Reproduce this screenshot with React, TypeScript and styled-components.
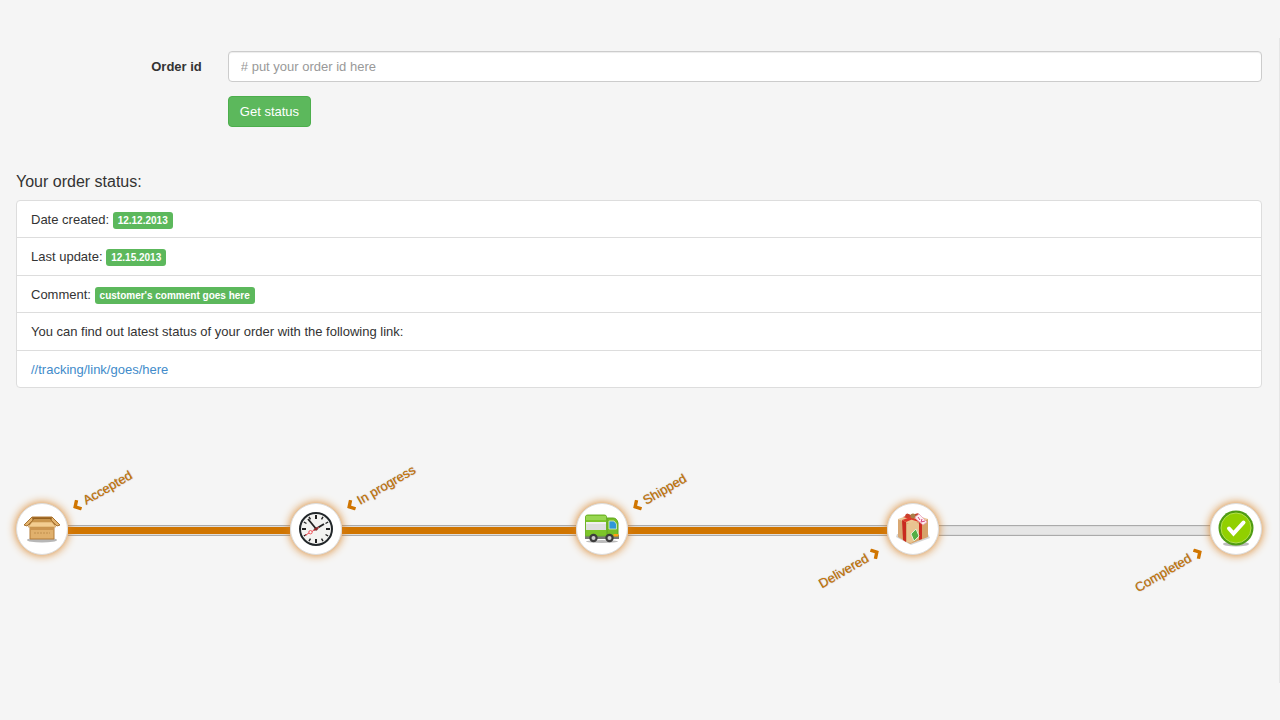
import React from "react";
import styled, { createGlobalStyle, css } from "styled-components";

const GlobalStyle = createGlobalStyle`
  * { box-sizing: border-box; }
  body {
    margin: 0;
    background: #f5f5f5;
    color: #333;
    font: 13px/20px "Liberation Sans", Arial, sans-serif;
  }
`;

const Well = styled.main`
  margin: 38px 0;
  padding: 13px 17px 128px 16px;
  border-right: 1px solid #e6e6e6;
  overflow: hidden;
`;

const OrderForm = styled.form`
  display: grid;
  grid-template-columns: 17% 83%;
  row-gap: 14px;
`;

const Label = styled.label`
  padding: 6px 26px 0 0;
  text-align: right;
  font-weight: bold;
`;

const TextInput = styled.input`
  width: 100%;
  height: 31px;
  padding: 0 12px;
  border: 1px solid #ccc;
  border-radius: 4px;
  background: #fff;
  box-shadow: inset 0 1px 1px rgba(0, 0, 0, 0.075);
  color: #555;
  font: inherit;
  &::placeholder { color: #999; opacity: 1; }
`;

const SubmitButton = styled.button`
  grid-column: 2;
  justify-self: start;
  height: 31px;
  padding: 0 11px;
  border: 1px solid #4cae4c;
  border-radius: 4px;
  background: #5cb85c;
  color: #fff;
  font: inherit;
`;

const Heading = styled.h4`
  margin: 45px 0 8px;
  font-size: 16px;
  line-height: 20px;
  font-weight: normal;
`;

const StatusList = styled.ul`
  margin: 0;
  padding: 0;
  list-style: none;
  border: 1px solid #ddd;
  border-radius: 4px;
  background: #fff;
`;

const StatusItem = styled.li`
  padding: 9px 14px 7px;
  & + & { border-top: 1px solid #ddd; }
  &:nth-child(even) { padding-bottom: 8px; }
`;

const Badge = styled.span`
  display: inline-block;
  padding: 0 5px;
  border-radius: 3px;
  background: #5cb85c;
  color: #fff;
  font-size: 10px;
  line-height: 17px;
  font-weight: bold;
`;

const Link = styled.a`
  color: #428bca;
  text-decoration: none;
`;

const Timeline = styled.section`
  display: flex;
  align-items: center;
  margin-top: 115px;
`;

const Step = styled.div`
  position: relative;
  flex: none;
  display: flex;
  align-items: center;
  justify-content: center;
  width: 52px;
  height: 52px;
  border: 1px solid #ddd;
  border-radius: 50%;
  background: #fff;
  box-shadow: 0 0 10px #d98020;
`;

const Track = styled.div<{ $grow: number; $done: boolean }>`
  flex: ${(p) => p.$grow} 1 0;
  height: 11px;
  margin-top: 2px;
  border: solid #aaa;
  border-width: 1px 0;
  background: ${(p) => (p.$done ? "#d07500" : "#e6e6e6")};
  box-shadow: inset 0 1px 0 #ddd, inset 0 -1px 0 #ddd;
`;

const StepLabel = styled.span<{ $below: boolean }>`
  position: absolute;
  display: flex;
  align-items: center;
  gap: 4px;
  color: #d07500;
  white-space: nowrap;
  text-shadow: 0 0 1px #777;
  transform: rotate(-30deg);
  ${(p) =>
    p.$below
      ? css`
          right: 59px;
          top: 37px;
          transform-origin: right center;
        `
      : css`
          left: 56px;
          bottom: 36px;
          transform-origin: left center;
        `}
`;

const Chevron = ({ flip = false }: { flip?: boolean }) => (
  <svg width="9" height="12" viewBox="0 0 9 12" aria-hidden="true">
    <path
      d={flip ? "M2 1 6.5 6 2 11" : "M7 1 2.5 6 7 11"}
      fill="none"
      stroke="#d07500"
      strokeWidth="3.4"
    />
  </svg>
);

const BoxIcon = () => (
  <svg width="38" height="28" viewBox="0 0 38 28" aria-hidden="true">
    <ellipse cx="19" cy="25" rx="15" ry="2.5" fill="#999" opacity=".7" />
    <path d="M7 11h24v13H7z" fill="#e0b06c" stroke="#b47c38" />
    <path d="M8 12h22v3H8z" fill="#cb9550" />
    <path d="M11 18h16" stroke="#c0904f" strokeDasharray="2 1" />
    <path d="M9 2h20l4 8H5z" fill="#94601f" stroke="#b47b35" />
    <path d="M11 4h16l3 3H9z" fill="#c9954c" />
    <path d="M9 2 1 10l3 1 6-6zM29 2l8 8-3 1-6-6z" fill="#e3b36e" stroke="#a87330" />
    <path d="M9 7h20l4 5H5z" fill="#f3cd91" stroke="#c99752" strokeWidth=".6" />
  </svg>
);

const ClockIcon = () => (
  <svg width="36" height="36" viewBox="0 0 36 36" aria-hidden="true">
    <circle cx="18" cy="18" r="16" fill="#f3f3f1" stroke="#22272a" strokeWidth="2" />
    {Array.from({ length: 12 }, (_, i) => (
      <path
        key={i}
        d={i % 3 === 0 ? "M18 4v4" : "M18 4v3"}
        stroke="#222"
        strokeWidth={i % 3 === 0 ? 2 : 1.4}
        transform={`rotate(${i * 30} 18 18)`}
      />
    ))}
    <path d="m19 19-9-11" stroke="#222" strokeWidth="1.8" />
    <path d="m16 19 10-6" stroke="#222" strokeWidth="2" />
    <path d="m21 16-7 4.5M11 22l-4 2.5" stroke="#f05058" strokeWidth="1" />
    <circle cx="12.5" cy="21.2" r="1.7" fill="none" stroke="#f05058" />
    <circle cx="18" cy="18" r="1.5" fill="#8d2424" />
  </svg>
);

const TruckIcon = () => (
  <svg width="36" height="30" viewBox="0 0 36 30" aria-hidden="true">
    <ellipse cx="18" cy="27.5" rx="16" ry="1.5" fill="#bbb" />
    <path d="M1 21h34v4H1z" fill="#777" />
    <path d="M23 4h6q4 0 5 5v13H23z" fill="#76be27" stroke="#62a71c" />
    <path d="M1.5 3q0-2 2-2h17q2 0 2 2v19h-21z" fill="#7dc52a" stroke="#6fb32c" />
    <path d="M2 2h20v4H2z" fill="#98d651" />
    <path d="M2 8h20v8H2z" fill="#dedede" />
    <path d="M2 8h20v2H2z" fill="#efefef" />
    <path d="M25 7h5l2.5 3v5H25z" fill="#2f97d8" stroke="#d9eec2" strokeWidth=".8" />
    <path d="M29.5 20h5v2.5h-5z" fill="#ff9e16" />
    {[9.5, 25.5].map((x) => (
      <g key={x}>
        <circle cx={x} cy="24" r="4.2" fill="#3d3d3d" />
        <circle cx={x} cy="24" r="2" fill="#ccc" />
      </g>
    ))}
  </svg>
);

const GiftIcon = () => (
  <svg width="36" height="34" viewBox="0 0 36 34" aria-hidden="true">
    <path d="m1 25 15 8 19-7-2-4H2z" fill="#bbb" opacity=".6" />
    <path d="m3 7 12 4v21L3 25z" fill="#d9a873" />
    <path d="m15 11 18-4v18l-18 7z" fill="#d6a269" />
    <path d="m3 7 14-5 16 5-18 5z" fill="#ecc795" />
    <path d="m7 8 4 2v20l-3-2z" fill="#c82a20" />
    <path d="m24 10 3-1v18l-3 1z" fill="#cf2d22" />
    <path d="m7 8 15-5 3 1-14 6zM11 4l16 5-3 1L8 5z" fill="#dd3a2a" />
    <path d="m12 12 8-3 4 3v14l-8 5-4-1z" fill="#e9c491" />
    <path d="m16 22 5-5 3 7-5 5z" fill="#55ae46" stroke="#e1efd2" />
    <path d="M17 4q-6-5-7 0 3 3 7 0 6-5 8-1-3 4-8 1z" fill="#c9402c" />
    <circle cx="18" cy="4" r="2.5" fill="#a97e48" />
    <path d="m20 5 4-3 8 8-4 3-7-6z" fill="#fdf0f4" stroke="#e69ab4" strokeWidth=".7" />
    <path d="m23 5 2 3m2-1-1 3 4-1" stroke="#d8447a" fill="none" />
  </svg>
);

const CheckIcon = () => (
  <svg width="36" height="38" viewBox="0 0 36 38" aria-hidden="true">
    <ellipse cx="18" cy="34" rx="13" ry="2.5" fill="#bbb" />
    <circle cx="18" cy="18" r="17.5" fill="#4f9c13" />
    <circle cx="18" cy="18" r="15" fill="#91d000" stroke="#b2df4d" />
    <path
      d="m11 18.500 4.500 5L25.500 12.500"
      fill="none"
      stroke="#fff"
      strokeWidth="4"
      strokeLinecap="round"
    />
  </svg>
);

const steps = [
  { name: "Accepted", icon: <BoxIcon />, below: false, grow: 222, done: true },
  { name: "In progress", icon: <ClockIcon />, below: false, grow: 234, done: true },
  { name: "Shipped", icon: <TruckIcon />, below: false, grow: 260, done: true },
  { name: "Delivered", icon: <GiftIcon />, below: true, grow: 271, done: false },
  { name: "Completed", icon: <CheckIcon />, below: true, grow: 0, done: false },
];

export default function App() {
  return (
    <>
      <GlobalStyle />
      <Well>
        <OrderForm onSubmit={(e) => e.preventDefault()}>
          <Label htmlFor="order-id">Order id</Label>
          <TextInput id="order-id" type="text" placeholder="# put your order id here" />
          <SubmitButton type="submit">Get status</SubmitButton>
        </OrderForm>
        <Heading>Your order status:</Heading>
        <StatusList>
          <StatusItem>Date created: <Badge>12.12.2013</Badge></StatusItem>
          <StatusItem>Last update: <Badge>12.15.2013</Badge></StatusItem>
          <StatusItem>Comment: <Badge>customer's comment goes here</Badge></StatusItem>
          <StatusItem>You can find out latest status of your order with the following link:</StatusItem>
          <StatusItem><Link href="#tracking">//tracking/link/goes/here</Link></StatusItem>
        </StatusList>
        <Timeline>
          {steps.map((s) => (
            <React.Fragment key={s.name}>
              <Step>
                {s.icon}
                <StepLabel $below={s.below}>
                  {!s.below && <Chevron />}
                  {s.name}
                  {s.below && <Chevron flip />}
                </StepLabel>
              </Step>
              {s.grow > 0 && <Track $grow={s.grow} $done={s.done} />}
            </React.Fragment>
          ))}
        </Timeline>
      </Well>
    </>
  );
}
